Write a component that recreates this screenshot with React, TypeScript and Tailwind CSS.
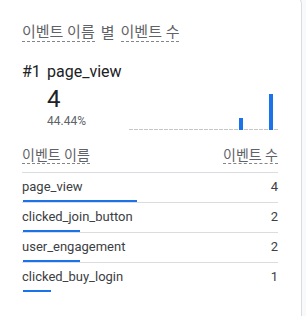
import React from "react";

const rows = [
  { name: "page_view", count: 4 },
  { name: "clicked_join_button", count: 2 },
  { name: "user_engagement", count: 2 },
  { name: "clicked_buy_login", count: 1 },
];

const total = rows.reduce((s, r) => s + r.count, 0);

// daily counts for the sparkline (30 slots)
const daily = Array.from({ length: 30 }, (_, i) => (i === 22 ? 1 : i === 28 ? 3 : 0));

function Sparkline() {
  const max = Math.max(...daily);
  return (
    <svg width="149" height="40" viewBox="0 0 149 40" className="block">
      <line x1="0" y1="38.5" x2="149" y2="38.5" stroke="#c4c7c5" strokeWidth="1" strokeDasharray="4 1" />
      {daily.map((v, i) =>
        v > 0 ? <rect key={i} x={i * 5} y={39 - (v / max) * 36} width="4" height={(v / max) * 36} fill="#1a73e8" /> : null
      )}
    </svg>
  );
}

export default function App() {
  const font = { fontFamily: "Roboto, 'Noto Sans CJK KR', sans-serif" };
  return (
    <div className="w-[306px] h-[316px] bg-[#f8f9fa] overflow-hidden" style={font}>
      <div className="w-[302px] h-[340px] -mt-[4px] bg-white border-t border-r border-[#dadce0] rounded-tr-[8px] pl-[22px] pr-[23px] pt-[26px]">
        {/* Card title */}
        <div className="flex items-end text-[15px] leading-[18px] text-[#5f6368]">
          <span className="border-b border-dashed border-[#80868b]">이벤트 이름</span>
          <span className="mx-[6px]">별</span>
          <span className="border-b border-dashed border-[#80868b]">이벤트 수</span>
        </div>

        {/* Top item */}
        <div className="mt-[20px] flex text-[16px] leading-[20px] text-[#202124]">
          <span className="w-[25px]">#1</span>
          <span>page_view</span>
        </div>
        <div className="mt-[3px] flex items-end">
          <div className="pl-[25px] pb-[2px]">
            <div className="text-[24px] leading-[28px] text-[#202124]">4</div>
            <div className="text-[12px] leading-[16px] text-[#5f6368]">44.44%</div>
          </div>
          <div className="ml-auto">
            <Sparkline />
          </div>
        </div>

        {/* Table header */}
        <div className="mt-[16px] flex justify-between items-end pb-[8px] border-b border-[#dadce0] text-[14px] leading-[16px] text-[#5f6368]">
          <span className="border-b border-dashed border-[#80868b]">이벤트 이름</span>
          <span className="border-b border-dashed border-[#80868b]">이벤트 수</span>
        </div>

        {/* Rows */}
        {rows.map((r, i) => (
          <div key={r.name} className={i < rows.length - 1 ? "border-b border-[#dadce0]" : ""}>
            <div className="h-[27px] flex items-center justify-between text-[13px] text-[#3c4043]">
              <span>{r.name}</span>
              <span>{r.count}</span>
            </div>
            <div className="h-[2px] ml-px bg-[#1a73e8]" style={{ width: `${(r.count / total) * 256}px` }} />
          </div>
        ))}
      </div>
    </div>
  );
}
